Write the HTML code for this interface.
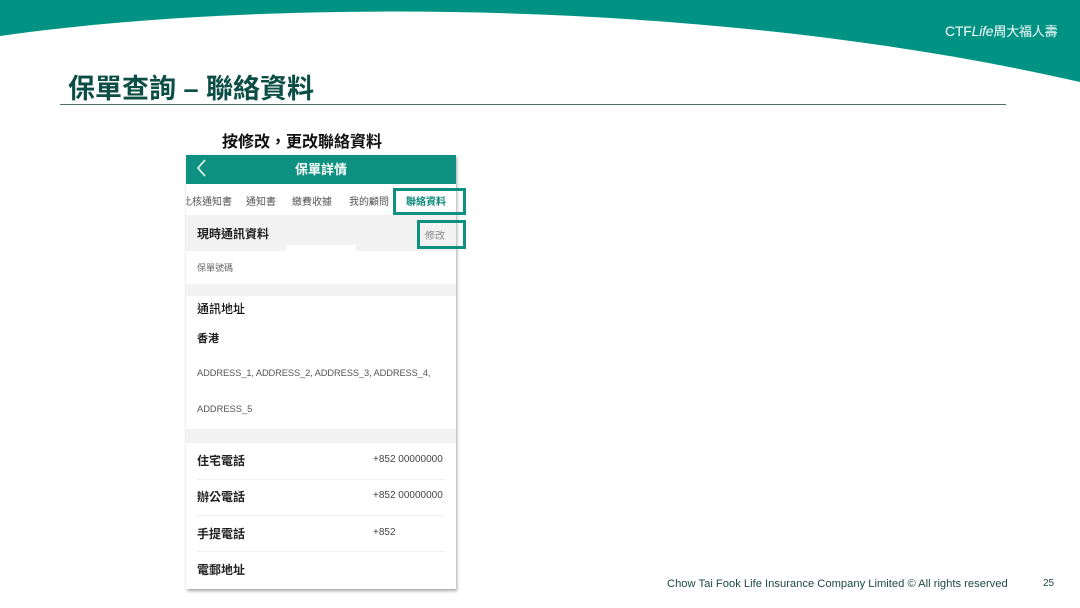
<!DOCTYPE html>
<html><head><meta charset="utf-8"><style>
*{margin:0;padding:0;box-sizing:border-box}
body{width:1080px;height:608px;position:relative;overflow:hidden;background:#fff;font-family:"Liberation Sans","Noto Sans CJK TC",sans-serif}
.a{position:absolute;white-space:nowrap}
.ph{position:absolute;left:186px;top:155px;width:270px;height:434px;background:#fff;box-shadow:1px 2px 3px rgba(0,0,0,.35);overflow:hidden}
</style></head><body>
<svg class="a" style="left:0;top:0" width="1080" height="100">
<rect width="1080" height="100" fill="#009384"/>
<path d="M0,36 C250,0 700,-5 1080,82 L1080,100 L0,100Z" fill="#fff"/>
</svg>
<div class="a" style="left:945px;top:21px;color:#fff;font-size:14px;letter-spacing:-0.2px">CTF<span style="font-style:italic">Life</span><span style="font-size:13px">周大福人壽</span></div>
<div class="a" style="left:68px;top:67px;font-size:27px;font-weight:bold;color:#0c4e45">保單查詢 – 聯絡資料</div>
<div class="a" style="left:60px;top:104px;width:946px;height:1px;background:#4f6e6a"></div>
<div class="a" style="left:222px;top:128px;font-size:16px;font-weight:bold;color:#111">按修改，更改聯絡資料</div>
<div class="ph">
 <div class="a" style="left:0;top:0;width:270px;height:29px;background:#0f9181"></div>
 <svg class="a" style="left:10px;top:4px" width="12" height="18"><path d="M9,1 L2,9 L9,17" stroke="#fff" stroke-width="1.5" fill="none"/></svg>
 <div class="a" style="left:0;top:4px;width:270px;text-align:center;color:#fff;font-size:13px;font-weight:bold">保單詳情</div>
 <div class="a" style="left:-4px;top:38px;font-size:10px;color:#555">比核通知書</div>
 <div class="a" style="left:60px;top:38px;font-size:10px;color:#555">通知書</div>
 <div class="a" style="left:106px;top:38px;font-size:10px;color:#555">繳費收據</div>
 <div class="a" style="left:163px;top:38px;font-size:10px;color:#555">我的顧問</div>
 <div class="a" style="left:220px;top:38px;font-size:10px;color:#0f8b7c;font-weight:bold">聯絡資料</div>
 <div class="a" style="left:0;top:60px;width:270px;height:36px;background:#f2f2f2"></div>
 <div class="a" style="left:11px;top:70px;font-size:12px;font-weight:bold;color:#222">現時通訊資料</div>
 <div class="a" style="left:239px;top:72px;font-size:10px;color:#888">修改</div>
 <div class="a" style="left:100px;top:90px;width:70px;height:8px;background:#fff"></div>
 <div class="a" style="left:11px;top:106px;font-size:9px;color:#666">保單號碼</div>
 <div class="a" style="left:0;top:129px;width:270px;height:12px;background:#f2f2f2"></div>
 <div class="a" style="left:11px;top:145px;font-size:12px;color:#111;font-weight:500">通訊地址</div>
 <div class="a" style="left:11px;top:175px;font-size:11px;font-weight:bold;color:#222">香港</div>
 <div class="a" style="left:11px;top:213px;font-size:9.3px;color:#555;letter-spacing:-0.1px">ADDRESS_1, ADDRESS_2, ADDRESS_3, ADDRESS_4,</div>
 <div class="a" style="left:11px;top:249px;font-size:9.3px;color:#555">ADDRESS_5</div>
 <div class="a" style="left:0;top:274px;width:270px;height:14px;background:#f2f2f2"></div>
 <div class="a" style="left:11px;top:297px;font-size:12px;font-weight:bold;color:#222">住宅電話</div>
 <div class="a" style="left:187px;top:299px;font-size:10px;color:#444">+852 00000000</div>
 <div class="a" style="left:11px;top:324px;width:248px;height:1px;background:#f0f0f0"></div>
 <div class="a" style="left:11px;top:333px;font-size:12px;font-weight:bold;color:#222">辦公電話</div>
 <div class="a" style="left:187px;top:335px;font-size:10px;color:#444">+852 00000000</div>
 <div class="a" style="left:11px;top:360px;width:248px;height:1px;background:#f0f0f0"></div>
 <div class="a" style="left:11px;top:370px;font-size:12px;font-weight:bold;color:#222">手提電話</div>
 <div class="a" style="left:187px;top:372px;font-size:10px;color:#444">+852</div>
 <div class="a" style="left:11px;top:396px;width:248px;height:1px;background:#f0f0f0"></div>
 <div class="a" style="left:11px;top:406px;font-size:12px;font-weight:bold;color:#222">電郵地址</div>
</div>
<div class="a" style="left:393px;top:188px;width:73px;height:27px;border:3px solid #0f9181"></div>
<div class="a" style="left:417px;top:220px;width:49px;height:29px;border:3px solid #0f9181"></div>
<div class="a" style="left:667px;top:578px;font-size:11.2px;color:#1d4a44">Chow Tai Fook Life Insurance Company Limited © All rights reserved</div>
<div class="a" style="left:1043px;top:578px;font-size:10px;color:#1d4a44">25</div>
</body></html>
